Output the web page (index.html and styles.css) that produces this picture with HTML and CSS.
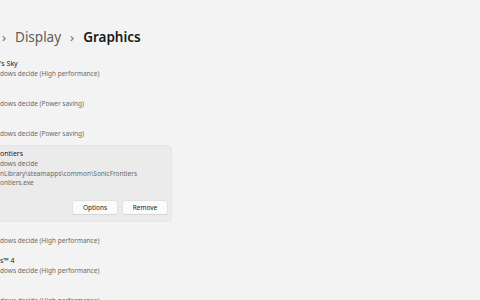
FILE: index.html
```html
<!DOCTYPE html>
<html lang="en">
<head>
    <meta charset="UTF-8">
    <title>Graphics</title>
    <link rel="stylesheet" href="styles.css">
</head>
<body>
    <div class="page">
        <div class="breadcrumb">
            <span class="chevron">›</span>
            <span class="crumb">Display</span>
            <span class="chevron">›</span>
            <span class="crumb current">Graphics</span>
        </div>

        <div class="app-list">
            <div class="app-row">
                <div class="app-name">'s Sky</div>
                <div class="app-pref">dows decide (High performance)</div>
            </div>
            <div class="app-row">
                <div class="app-name"></div>
                <div class="app-pref">dows decide (Power saving)</div>
            </div>
            <div class="app-row">
                <div class="app-name"></div>
                <div class="app-pref">dows decide (Power saving)</div>
            </div>
            <div class="app-card">
                <div class="app-name">ontiers</div>
                <div class="app-pref">dows decide</div>
                <div class="app-pref">nLibrary\steamapps\common\SonicFrontiers</div>
                <div class="app-pref">ontiers.exe</div>
                <div class="card-actions">
                    <button class="btn">Options</button>
                    <button class="btn">Remove</button>
                </div>
            </div>
            <div class="app-row">
                <div class="app-name"></div>
                <div class="app-pref">dows decide (High performance)</div>
            </div>
            <div class="app-row">
                <div class="app-name">s™ 4</div>
                <div class="app-pref">dows decide (High performance)</div>
            </div>
            <div class="app-row">
                <div class="app-name"></div>
                <div class="app-pref">dows decide (High performance)</div>
            </div>
        </div>
    </div>
</body>
</html>
```

FILE: styles.css
```css
body {
    margin: 0;
    background-color: #f3f3f3;
    font-family: "Noto Sans", "Open Sans", sans-serif;
    color: #1b1b1b;
    overflow: hidden;
}
.page {
    padding-top: 27px;
}
.breadcrumb {
    display: flex;
    align-items: center;
    height: 20px;
    padding-left: 2px;
    font-size: 13.5px;
}
.chevron {
    color: #6e6e6e;
    font-size: 13px;
    margin-right: 9px;
    line-height: 1;
}
.crumb {
    color: #5c5c5c;
    margin-right: 9px;
}
.crumb.current {
    color: #1a1a1a;
    font-weight: 600;
}
.app-list {
    margin-top: 7px;
    width: 171px;
}
.app-row {
    padding: 5px 0;
    height: 20px;
}
.app-name {
    font-size: 7px;
    line-height: 10px;
    height: 10px;
    color: #1b1b1b;
}
.app-pref {
    font-size: 6.5px;
    line-height: 10px;
    color: #6a6a6a;
}
.app-card {
    margin: 2px 0 0;
    padding: 3px 0 6px;
    background-color: #ebebeb;
    border-radius: 0 4px 4px 0;
    box-shadow: 0 0 0 1px #e4e4e4;
}
.app-card .app-pref {
    line-height: 9.5px;
}
.card-actions {
    display: flex;
    justify-content: flex-end;
    gap: 4px;
    margin-top: 12px;
    padding-right: 3px;
}
.btn {
    font-family: inherit;
    font-size: 6.5px;
    color: #1b1b1b;
    background-color: #fbfbfb;
    border: 1px solid #e2e2e2;
    border-bottom-color: #d6d6d6;
    border-radius: 3px;
    width: 46px;
    height: 15px;
    padding: 0;
}
```
